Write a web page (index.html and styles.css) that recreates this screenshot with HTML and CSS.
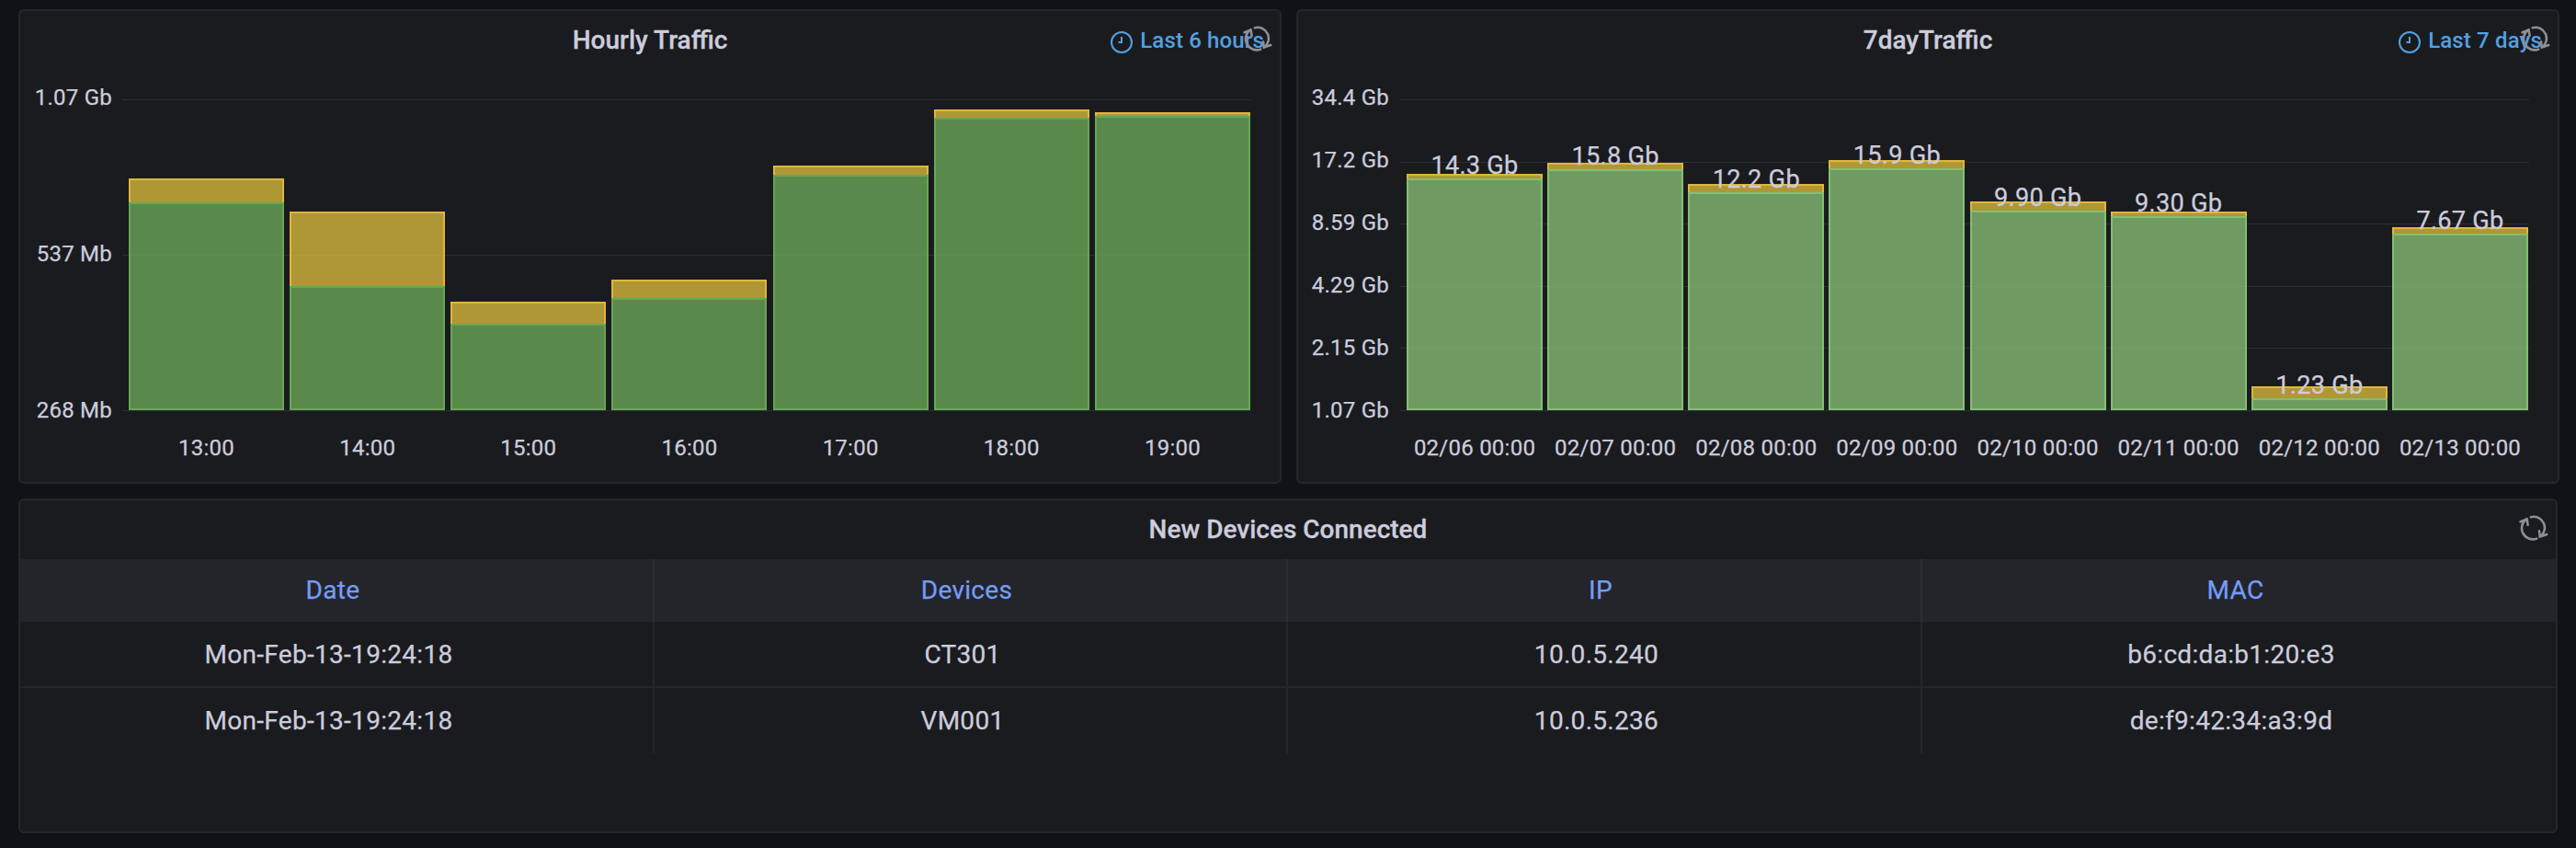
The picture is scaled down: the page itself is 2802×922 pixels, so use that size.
FILE: index.html
```
<!DOCTYPE html>
<html lang="en">
<head>
<meta charset="utf-8">
<title>Network dashboard</title>
<link rel="stylesheet" href="styles.css">
</head>
<body>
<svg class="defs" width="0" height="0" aria-hidden="true">
  <symbol id="clock" viewBox="0 0 24 24"><circle cx="12" cy="12" r="11"/><path d="M12 6v6H8.5"/></symbol>
  <symbol id="sync" viewBox="0 0 32 28"><path d="M12.8 2.2A12 12 0 0 1 22.7 23.7M19.2 25.6A12 12 0 0 1 8.6 4.2M1.6 7.2L8.6 4.4l1 6.4M30.2 21L22.8 23.6l-.8-6.4"/></symbol>
</svg>
<main class="dashboard">
  <section class="panel chart-panel">
    <header class="panel-header">
      <h2>Hourly Traffic</h2>
      <div class="time"><svg class="clock"><use href="#clock"/></svg><span>Last 6 hours</span></div>
      <svg class="sync"><use href="#sync"/></svg>
    </header>
    <div class="chart hourly">
      <div class="y-axis"><span>1.07 Gb</span><span>537 Mb</span><span>268 Mb</span></div>
      <div class="plot">
        <div class="grid"><i></i><i></i><i></i></div>
        <div class="bars">
          <div class="bar"><div class="up" style="height:26px"></div><div class="down" style="height:226px"></div></div>
          <div class="bar"><div class="up" style="height:81px"></div><div class="down" style="height:135px"></div></div>
          <div class="bar"><div class="up" style="height:24px"></div><div class="down" style="height:94px"></div></div>
          <div class="bar"><div class="up" style="height:20px"></div><div class="down" style="height:122px"></div></div>
          <div class="bar"><div class="up" style="height:10px"></div><div class="down" style="height:256px"></div></div>
          <div class="bar"><div class="up" style="height:9px"></div><div class="down" style="height:318px"></div></div>
          <div class="bar"><div class="up" style="height:4px"></div><div class="down" style="height:320px"></div></div>
        </div>
      </div>
      <div class="x-axis"><span>13:00</span><span>14:00</span><span>15:00</span><span>16:00</span><span>17:00</span><span>18:00</span><span>19:00</span></div>
    </div>
  </section>
  <section class="panel chart-panel">
    <header class="panel-header">
      <h2>7dayTraffic</h2>
      <div class="time"><svg class="clock"><use href="#clock"/></svg><span>Last 7 days</span></div>
      <svg class="sync"><use href="#sync"/></svg>
    </header>
    <div class="chart daily">
      <div class="y-axis"><span>34.4 Gb</span><span>17.2 Gb</span><span>8.59 Gb</span><span>4.29 Gb</span><span>2.15 Gb</span><span>1.07 Gb</span></div>
      <div class="plot">
        <div class="grid"><i></i><i></i><i></i><i></i><i></i><i></i></div>
        <div class="bars">
          <div class="bar"><div class="up" style="height:5px"></div><div class="down" style="height:252px"><b>14.3 Gb</b></div></div>
          <div class="bar"><div class="up" style="height:7px"></div><div class="down" style="height:262px"><b>15.8 Gb</b></div></div>
          <div class="bar"><div class="up" style="height:9px"></div><div class="down" style="height:237px"><b>12.2 Gb</b></div></div>
          <div class="bar"><div class="up" style="height:9px"></div><div class="down" style="height:263px"><b>15.9 Gb</b></div></div>
          <div class="bar"><div class="up" style="height:10px"></div><div class="down" style="height:217px"><b>9.90 Gb</b></div></div>
          <div class="bar"><div class="up" style="height:5px"></div><div class="down" style="height:211px"><b>9.30 Gb</b></div></div>
          <div class="bar"><div class="up" style="height:13px"></div><div class="down" style="height:13px"><b>1.23 Gb</b></div></div>
          <div class="bar"><div class="up" style="height:7px"></div><div class="down" style="height:192px"><b>7.67 Gb</b></div></div>
        </div>
      </div>
      <div class="x-axis"><span>02/06 00:00</span><span>02/07 00:00</span><span>02/08 00:00</span><span>02/09 00:00</span><span>02/10 00:00</span><span>02/11 00:00</span><span>02/12 00:00</span><span>02/13 00:00</span></div>
    </div>
  </section>
  <section class="panel table-panel">
    <header class="panel-header">
      <h2>New Devices Connected</h2>
      <svg class="sync"><use href="#sync"/></svg>
    </header>
    <div class="row head"><div>Date</div><div>Devices</div><div>IP</div><div>MAC</div></div>
    <div class="row"><div>Mon-Feb-13-19:24:18</div><div>CT301</div><div>10.0.5.240</div><div>b6:cd:da:b1:20:e3</div></div>
    <div class="row last"><div>Mon-Feb-13-19:24:18</div><div>VM001</div><div>10.0.5.236</div><div>de:f9:42:34:a3:9d</div></div>
  </section>
</main>
</body>
</html>
```
FILE: styles.css
```
* { box-sizing: border-box; }
body {
  margin: 0;
  height: 922px;
  background: #111217;
  color: #ccccdc;
  font-family: Roboto, "Liberation Sans", sans-serif;
  overflow: hidden;
}
.defs { position: absolute; }
.dashboard {
  display: grid;
  grid-template-columns: 1374px 1374px;
  grid-template-rows: 516px 364px;
  gap: 16px;
  padding: 10px 18px 0 20px;
}
.panel {
  position: relative;
  background: #1a1b1f;
  border: 2px solid #25262b;
  border-radius: 6px;
}
.table-panel { grid-column: 1 / 3; width: 2762px; }
.panel-header {
  display: flex;
  justify-content: center;
  height: 64px;
  padding-top: 15px;
}
h2 {
  margin: 0;
  font-size: 28px;
  font-weight: 500;
  line-height: 34px;
  -webkit-text-stroke: 0.3px #ccccdc;
}
.time {
  position: absolute;
  right: 17px;
  top: 16px;
  display: flex;
  align-items: center;
  gap: 8px;
  color: #53a0e0;
  font-size: 24px;
  font-weight: 500;
  line-height: 32px;
  letter-spacing: 0.15px;
}
.clock {
  width: 24px;
  height: 24px;
  margin-top: 4px;
  fill: none;
  stroke: #53a0e0;
  stroke-width: 2;
}
.sync {
  position: absolute;
  right: 8px;
  top: 16px;
  width: 32px;
  height: 28px;
  fill: none;
  stroke: #8e8e99;
  stroke-width: 2.6;
  stroke-linecap: round;
  stroke-linejoin: round;
}

/* charts */
.chart {
  display: grid;
  grid-template-rows: 339px 48px;
  padding-top: 32px;
  font-size: 24px;
  line-height: 28px;
  letter-spacing: 0.24px;
  -webkit-text-stroke: 0.25px #ccccdc;
}
.hourly { grid-template-columns: 111px 1228px; }
.daily { grid-template-columns: 110px 1229px; }
.y-axis {
  display: flex;
  flex-direction: column;
  justify-content: space-between;
  margin: -16px 0 -13px;
  padding-right: 11px;
  text-align: right;
}
.plot { position: relative; display: flex; }
.grid {
  position: absolute;
  inset: 0;
  display: flex;
  flex-direction: column;
  justify-content: space-between;
}
.grid i { height: 1px; background: #2d2e33; }
.bars {
  position: relative;
  flex: 1;
  display: flex;
  justify-content: space-between;
  align-items: flex-end;
  padding: 0 1px 1px 7px;
}
.daily .bars { padding-left: 8px; }
.bar { width: 169px; }
.daily .bar { width: 148px; }
.up {
  background: rgba(223, 190, 60, 0.76);
  background-clip: padding-box;
  border: 2px solid #deb63b;
  border-bottom: 0;
}
.down {
  position: relative;
  background: rgba(105, 163, 86, 0.82);
  border: 2px solid #67a657;
}
.daily .down {
  background: rgba(130, 184, 113, 0.82);
  border-color: #83bf71;
}
.down b {
  position: absolute;
  left: -2px;
  right: -2px;
  top: -32px;
  text-align: center;
  font-size: 27.2px;
  font-weight: 400;
  line-height: 32px;
}
.x-axis {
  grid-column: 2;
  display: flex;
  justify-content: space-between;
  padding: 26px 1px 0 7px;
}
.x-axis span { width: 169px; text-align: center; white-space: nowrap; }
.daily .x-axis { padding-left: 8px; }
.daily .x-axis span { width: 148px; }

/* table */
.row {
  display: grid;
  grid-template-columns: 690px 689px 690px 689px;
  height: 72px;
  border-bottom: 2px solid #25262b;
  font-size: 28px;
  line-height: 72px;
  letter-spacing: 0.3px;
  text-align: center;
  -webkit-text-stroke: 0.25px;
}
.row div { height: 70px; border-right: 2px solid #25262b; padding-right: 17px; }
.row div:last-child { border-right: 0; }
.row.last { border-bottom: 0; }
.row.last div { height: 71px; }
.row.head {
  height: 68px;
  line-height: 68px;
  background: #23252a;
  border-bottom: 0;
  color: #759cf8;
}
.head div { height: 68px; padding-right: 8px; border-color: #2d2e34; }
```
